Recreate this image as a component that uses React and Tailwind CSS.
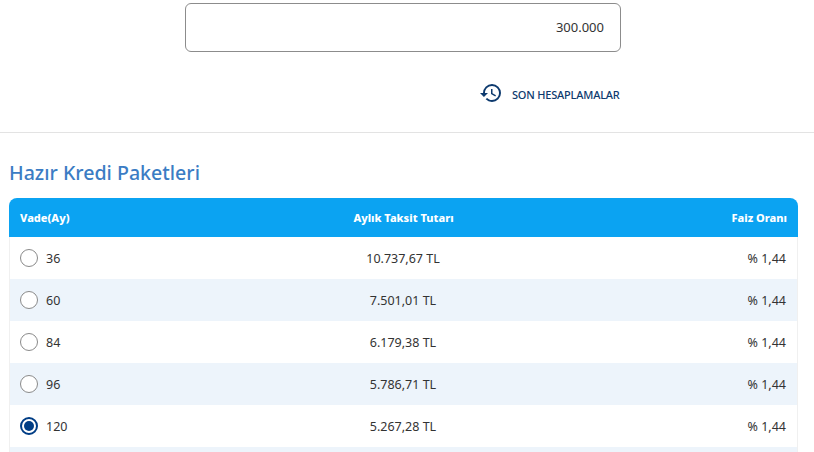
const rows = [
  { vade: "36", taksit: "10.737,67 TL" },
  { vade: "60", taksit: "7.501,01 TL" },
  { vade: "84", taksit: "6.179,38 TL" },
  { vade: "96", taksit: "5.786,71 TL" },
  { vade: "120", taksit: "5.267,28 TL", selected: true },
  { vade: "", taksit: "" },
];

function HistoryIcon() {
  return (
    <svg width="24" height="24" viewBox="0 0 24 24" fill="currentColor">
      <path d="M13 3a9 9 0 0 0-9 9H1l3.89 3.89.07.14L9 12H6c0-3.87 3.13-7 7-7s7 3.13 7 7-3.13 7-7 7c-1.93 0-3.68-.79-4.94-2.06l-1.42 1.42A8.954 8.954 0 0 0 13 21a9 9 0 0 0 0-18zm-1 5v5l4.28 2.54.72-1.21-3.5-2.08V8H12z" />
    </svg>
  );
}

function Radio({ selected }) {
  if (selected) {
    return (
      <span className="flex h-[18px] w-[18px] items-center justify-center rounded-full border-[2.5px] border-[#003d85] bg-white">
        <span className="h-[10px] w-[10px] rounded-full bg-[#003d85]"></span>
      </span>
    );
  }
  return <span className="h-[18px] w-[18px] rounded-full border border-[#8a8a8a] bg-white"></span>;
}

export default function App() {
  return (
    <div className="h-[452px] w-[814px] overflow-hidden bg-white font-['Noto_Sans',sans-serif]">
      <div className="h-[133px] border-b border-[#e3e3e3] pt-[3px]">
        <div className="ml-[185px] flex h-[49px] w-[436px] items-center justify-end rounded-md border border-[#8c8c8c] pr-4 text-[13px] text-[#333]">
          300.000
        </div>
        <div className="mt-[29px] ml-[479px] flex items-center gap-[9px] text-[#0d3a6e]">
          <HistoryIcon />
          <span className="mt-1 text-[11px] font-medium tracking-[-0.2px]">SON HESAPLAMALAR</span>
        </div>
      </div>

      <div className="pl-[9px] pr-4">
        <h2 className="mt-[26px] mb-[11px] text-[19.6px] leading-[28px] font-medium text-[#3b7cc4]">
          Hazır Kredi Paketleri
        </h2>
        <div className="w-[789px]">
          <div className="grid h-[39px] grid-cols-3 items-center rounded-t-lg bg-[#0ba3f2] px-[11px] pt-px text-[11px] font-extrabold text-white">
            <span>Vade(Ay)</span>
            <span className="text-center">Aylık Taksit Tutarı</span>
            <span className="text-right">Faiz Oranı</span>
          </div>
          {rows.map((row, i) => (
            <div
              key={i}
              className={`grid h-[42px] grid-cols-3 items-center border-x border-[#f0f0f0] pl-[10px] pr-[11px] text-[12.5px] text-[#333] ${
                i % 2 === 1 ? "bg-[#edf4fb]" : "bg-white"
              }`}
            >
              {row.vade && (
                <>
                  <span className="flex items-center gap-2">
                    <Radio selected={row.selected} />
                    <span className="pt-[2px]">{row.vade}</span>
                  </span>
                  <span className="pt-[2px] text-center">{row.taksit}</span>
                  <span className="pt-[2px] text-right">% 1,44</span>
                </>
              )}
            </div>
          ))}
        </div>
      </div>
    </div>
  );
}
